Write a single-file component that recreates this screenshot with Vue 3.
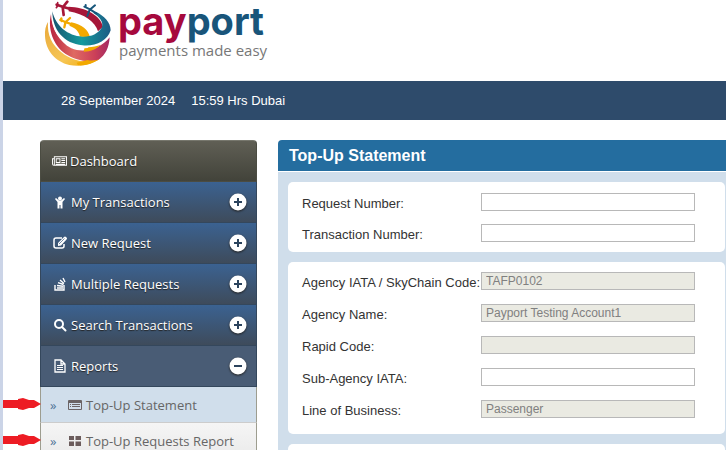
<script setup>
import { ref } from 'vue'

const menu = [
  { label: 'My Transactions', icon: 'person' },
  { label: 'New Request', icon: 'edit' },
  { label: 'Multiple Requests', icon: 'stack' },
  { label: 'Search Transactions', icon: 'search' },
  { label: 'Reports', icon: 'file', open: true },
]

const reports = [
  { label: 'Top-Up Statement', icon: 'list', active: true },
  { label: 'Top-Up Requests Report', icon: 'grid' },
]

const search = ref([
  { id: 'request', label: 'Request Number:', value: '' },
  { id: 'transaction', label: 'Transaction Number:', value: '' },
])

const agency = ref([
  { id: 'iata', label: 'Agency IATA / SkyChain Code:', value: 'TAFP0102', disabled: true },
  { id: 'name', label: 'Agency Name:', value: 'Payport Testing Account1', disabled: true },
  { id: 'rapid', label: 'Rapid Code:', value: '', disabled: true },
  { id: 'sub', label: 'Sub-Agency IATA:', value: '' },
  { id: 'business', label: 'Line of Business:', value: 'Passenger', disabled: true },
])
</script>

<template>
  <div class="page">
    <header class="brand">
      <svg class="globe" viewBox="0 0 252 216" aria-hidden="true">
        <defs>
          <linearGradient id="gold" x1="0" y1="0" x2="1" y2="1">
            <stop offset="0" stop-color="#e9a93a" />
            <stop offset=".6" stop-color="#f6c656" />
            <stop offset="1" stop-color="#f2a900" />
          </linearGradient>
          <linearGradient id="coral" x1="0" y1="0" x2="1" y2="0">
            <stop offset="0" stop-color="#b8233f" />
            <stop offset=".4" stop-color="#df6a62" />
            <stop offset=".75" stop-color="#cc4058" />
            <stop offset="1" stop-color="#a32a63" />
          </linearGradient>
          <linearGradient id="teal" x1="0" y1="0" x2="1" y2="0">
            <stop offset="0" stop-color="#16546f" />
            <stop offset=".5" stop-color="#159a9d" />
            <stop offset="1" stop-color="#1d5b85" />
          </linearGradient>
        </defs>
        <path fill="url(#gold)" d="M36 66C33 105 48 136 78 158C108 181 145 192 190 177C166 194 133 201 100 195C58 185 29 152 27 108C26 91 29 78 36 66Z" />
        <path fill="#f2a900" d="M106 67C138 75 157 88 162 112L132 110C128 93 119 84 100 77Z" />
        <path fill="url(#coral)" d="M45 42C46 86 70 126 106 145C146 162 195 145 221 112C219 143 208 166 188 179C158 189 118 181 89 162C52 136 34 88 45 42Z" />
        <path fill="#f2a900" d="M146 141C164 143 181 139 194 134C183 146 165 155 143 155Z" />
        <path fill="#f2a900" d="M122 188C137 185 147 182 154 180C167 183 178 182 190 178C171 191 148 198 126 196Z" />
        <path fill="#a61638" d="M97 20C150 21 194 47 201 80L186 94C177 65 146 43 98 34Z" />
        <path fill="#fff" d="M47 48C58 91 88 126 127 136C140 140 151 139 160 138L155 144C136 147 120 145 106 139C68 121 49 90 47 48Z" />
        <path fill="url(#teal)" d="M49 34C59 78 96 108 139 110C164 111 186 103 198 82C203 65 190 50 172 39L179 35C204 47 224 66 224 91C214 123 178 140 139 136C85 131 49 91 49 34Z" />
        <g fill="none" stroke-linecap="round" stroke-linejoin="round">
          <path stroke="#a61638" stroke-width="8" d="M62 14L80 20L103 27M81 21L94 5M80 22L83 45" />
          <path stroke="#a61638" stroke-width="5" d="M65 17L61 23M65 14L65 8" />
          <path stroke="#17567b" stroke-width="6" d="M145 20L162 28L182 41M163 28L177 16M161 29L154 48M149 22L149 15" />
          <path stroke="#f2a900" stroke-width="7" d="M73 60L88 66L108 73M89 66L102 54M88 68L85 82M77 63L76 55" />
        </g>
      </svg>
      <div class="wordmark">
        <div class="name"><span class="pay">pay</span><span class="port">port</span></div>
        <div class="tagline">payments made easy</div>
      </div>
    </header>

    <div class="clock"><span>28 September 2024</span><span>15:59 Hrs Dubai</span></div>

    <div class="layout">
      <nav class="sidebar">
        <a class="item dashboard" href="#">
          <svg class="icon wide" viewBox="0 0 16 12"><path fill="#fff" fill-rule="evenodd" d="M2 1h14v10H2Q0 11 0 9V3h2ZM1 4v5q0 1 1 1V4ZM3 2v8h12V2Zm1 1h5v5H4Zm1 1v3h3V4Zm5-1h4v1h-4Zm0 2h4v1h-4Zm0 2h4v1h-4ZM4 9h10v1H4Z" /></svg>
          <span>Dashboard</span>
        </a>
        <a v-for="m in menu" :key="m.label" class="item" :class="{ open: m.open }" href="#">
          <svg class="icon" viewBox="0 0 14 14">
            <g v-if="m.icon === 'person'" fill="#fff">
              <circle cx="7" cy="3.500" r="2" />
              <path d="M3 3L6 5.500h2L11 3l1 1L9.500 7v6.500H7.500V10h-1v3.500h-2V7L2 4Z" />
            </g>
            <g v-else-if="m.icon === 'edit'" fill="none" stroke="#fff">
              <path stroke-width="1.500" d="M9 2H3Q1 2 1 4v6q0 2 2 2h6q2 0 2-2V8" />
              <path fill="#fff" stroke="none" d="M5 10V7l6-6q1-1 2 0l.5.5q1 1 0 2L8 9.500Z" />
              <path stroke="#3e5a7c" stroke-width=".7" d="M6 8L11.500 2.500" />
            </g>
            <g v-else-if="m.icon === 'stack'" fill="none" stroke="#fff" stroke-width="1.400">
              <path d="M2 8v5h9V8M4 11h6M4 8.500l6 .7M5 5.700l5.500 1.800M7 3l4 3.500M10 1l2 4" />
            </g>
            <g v-else-if="m.icon === 'search'" fill="none" stroke="#fff" stroke-width="2">
              <circle cx="6" cy="6" r="4" /><path stroke-linecap="round" d="M9 9l3.500 3.500" />
            </g>
            <g v-else fill="none" stroke="#fff">
              <path stroke-width="1.300" d="M2 1h6l4 4v8H2ZM8 1v4h4" /><path d="M4 6.500h6M4 8.500h6M4 10.500h6" />
            </g>
          </svg>
          <span>{{ m.label }}</span>
          <svg class="toggle" viewBox="0 0 18 18">
            <circle cx="9" cy="9" r="8.500" fill="#fff" />
            <path stroke="#2b435d" stroke-width="2" :d="m.open ? 'M5 9h8' : 'M5 9h8M9 5v8'" />
          </svg>
        </a>
        <a v-for="r in reports" :key="r.label" class="sub" :class="{ active: r.active }" href="#">
          <span class="chevron">»</span>
          <svg class="icon" viewBox="0 0 14 14">
            <path v-if="r.icon === 'list'" fill="#6b6465" fill-rule="evenodd" d="M1 2h12q1 0 1 1v8q0 1-1 1H1q-1 0-1-1V3q0-1 1-1Zm0 3v6h12V5Zm1 1h1v1H2Zm2 0h8v1H4ZM2 8h1v1H2Zm2 0h8v1H4Z" />
            <path v-else fill="#6b5c5c" d="M1 2h5v4H1ZM7.500 2h5.500v4H7.500ZM1 7.500h5v4.500H1ZM7.500 7.500h5.500v4.500H7.500Z" />
          </svg>
          <span>{{ r.label }}</span>
          <svg class="arrow" viewBox="0 0 38 12" aria-hidden="true"><path fill="#ed1c24" d="M0 2h15V1l5-1 6 2h5l7 4-7 4h-5l-6 2-5-1v-1H0Z" /></svg>
        </a>
      </nav>

      <main class="panel">
        <h1>Top-Up Statement</h1>
        <form class="body">
          <section class="card">
            <div v-for="f in search" :key="f.id" class="row">
              <label :for="f.id">{{ f.label }}</label>
              <input :id="f.id" v-model="f.value" type="text">
            </div>
          </section>
          <section class="card details">
            <div v-for="f in agency" :key="f.id" class="row">
              <label :for="f.id">{{ f.label }}</label>
              <input :id="f.id" v-model="f.value" type="text" :disabled="f.disabled">
            </div>
          </section>
          <section class="card"></section>
        </form>
      </main>
    </div>
  </div>
</template>

<style>
body {
  background: #fff;
  overflow: hidden;
}
</style>

<style scoped>
.page {
  box-sizing: border-box;
  height: 100vh;
  overflow: hidden;
  border-left: 3px solid #cbd4e7;
  font-family: "Liberation Sans", Arial, sans-serif;
  font-size: 13px;
  color: #333;
}
.brand {
  display: flex;
  height: 81px;
  padding-left: 33px;
}
.globe {
  width: 84px;
  height: 72px;
}
.wordmark {
  margin-left: -2px;
  white-space: nowrap;
}
.name {
  font-family: Inter, sans-serif;
  font-size: 38px;
  font-weight: 700;
  line-height: 42px;
}
.pay {
  color: #a6093d;
}
.port {
  color: #19557a;
}
.tagline {
  padding-left: 1px;
  font-family: "Open Sans", sans-serif;
  font-size: 15px;
  line-height: 16px;
  color: #777;
}
.clock {
  display: flex;
  gap: 16px;
  padding-left: 58px;
  background: #2e4b6b;
  color: #fff;
  line-height: 39px;
}
.layout {
  display: flex;
  align-items: flex-start;
  gap: 21px;
  padding: 20px 0 0 37px;
}
.sidebar {
  flex: none;
  width: 217px;
  border-radius: 4px 4px 0 0;
  font-family: "Open Sans", sans-serif;
}
.item,
.sub {
  box-sizing: border-box;
  display: flex;
  align-items: center;
  text-decoration: none;
}
.item {
  height: 41px;
  gap: 4px;
  padding: 0 9px 0 12px;
  border: 1px solid #34475c;
  border-top: 0;
  background: linear-gradient(#3b6291, #3e4b5b);
  color: #fff;
  text-shadow: 0 1px 1px #222;
}
.item.open {
  background: #495c75;
}
.item.dashboard {
  height: 42px;
  gap: 3px;
  padding-left: 11px;
  border: 1px solid #4b4c42;
  border-top: 1px solid #77776d;
  border-radius: 4px 4px 0 0;
  background: linear-gradient(#605f55, #42433a);
}
.icon {
  flex: none;
  width: 14px;
  height: 14px;
}
.icon.wide {
  width: 15px;
  height: 12px;
}
.toggle {
  width: 18px;
  height: 18px;
  margin-left: auto;
  filter: drop-shadow(0 1px 1px #222);
}
.sub {
  position: relative;
  height: 36px;
  gap: 4px;
  padding-left: 9px;
  border: 1px solid #9d9d8f;
  border-width: 0 1px 1px;
  border-bottom-color: #ccc;
  background: linear-gradient(#f5f5f5, #eaeaea);
  color: #666;
  white-space: nowrap;
}
.sub.active {
  background: #d0deeb;
}
.chevron {
  width: 14px;
  color: #4f7396;
}
.arrow {
  position: absolute;
  left: -38px;
  top: 11px;
  width: 38px;
  height: 12px;
}
.panel {
  flex: 1;
  min-width: 0;
}
h1 {
  margin: 0 0 1px;
  padding-left: 11px;
  border-radius: 4px 0 0 0;
  background: #246d9f;
  color: #fff;
  font-size: 16px;
  line-height: 31px;
}
.body {
  display: flex;
  flex-direction: column;
  gap: 10px;
  padding: 10px 1px 10px 10px;
  background: #d0deeb;
}
.card {
  display: flex;
  flex-direction: column;
  gap: 13px;
  min-height: 20px;
  padding: 11px 30px 10px 14px;
  border-radius: 5px;
  background: #fff;
}
.card.details {
  gap: 14px;
  padding: 10px 30px 16px 14px;
}
.row {
  display: grid;
  grid-template-columns: 179px minmax(0, 1fr);
  height: 18px;
}
label {
  line-height: 22px;
  white-space: nowrap;
}
input {
  box-sizing: border-box;
  width: 100%;
  height: 18px;
  padding: 0 4px;
  border: 1px solid #b8b8b8;
  border-radius: 0;
  background: #fff;
  color: #333;
  font: 12px "Liberation Sans", Arial, sans-serif;
}
input:disabled {
  background: #eaeae2;
  color: #808080;
}
</style>
